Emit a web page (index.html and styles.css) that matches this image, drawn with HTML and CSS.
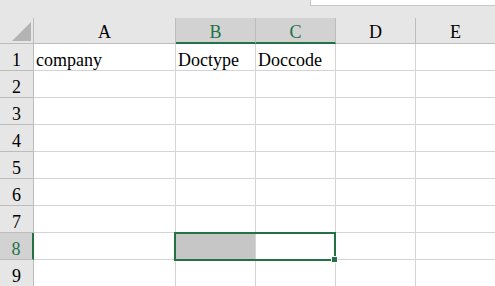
FILE: index.html
```html
<!DOCTYPE html>
<html lang="en">
<head>
    <meta charset="UTF-8">
    <title>Sheet1</title>
    <link rel="stylesheet" href="styles.css">
</head>
<body>
    <div class="topbar">
        <div class="formula-box"></div>
    </div>

    <div class="sheet">
        <div class="grid">
            <!-- column headers -->
            <div class="corner"><span class="corner-tri"></span></div>
            <div class="col-head">A</div>
            <div class="col-head active">B</div>
            <div class="col-head active">C</div>
            <div class="col-head">D</div>
            <div class="col-head">E</div>

            <div class="row-head">1</div>
            <div class="cell">company</div>
            <div class="cell">Doctype</div>
            <div class="cell">Doccode</div>
            <div class="cell"></div>
            <div class="cell"></div>

            <div class="row-head">2</div>
            <div class="cell"></div><div class="cell"></div><div class="cell"></div><div class="cell"></div><div class="cell"></div>

            <div class="row-head">3</div>
            <div class="cell"></div><div class="cell"></div><div class="cell"></div><div class="cell"></div><div class="cell"></div>

            <div class="row-head">4</div>
            <div class="cell"></div><div class="cell"></div><div class="cell"></div><div class="cell"></div><div class="cell"></div>

            <div class="row-head">5</div>
            <div class="cell"></div><div class="cell"></div><div class="cell"></div><div class="cell"></div><div class="cell"></div>

            <div class="row-head">6</div>
            <div class="cell"></div><div class="cell"></div><div class="cell"></div><div class="cell"></div><div class="cell"></div>

            <div class="row-head">7</div>
            <div class="cell"></div><div class="cell"></div><div class="cell"></div><div class="cell"></div><div class="cell"></div>

            <div class="row-head active">8</div>
            <div class="cell"></div>
            <div class="cell selected"></div>
            <div class="cell"></div>
            <div class="cell"></div>
            <div class="cell"></div>

            <div class="row-head">9</div>
            <div class="cell"></div><div class="cell"></div><div class="cell"></div><div class="cell"></div><div class="cell"></div>
        </div>

        <!-- selection range B8:C8 -->
        <div class="selection"><span class="fill-handle"></span></div>
    </div>
</body>
</html>
```

FILE: styles.css
```css
html, body {
    margin: 0;
    padding: 0;
    overflow: hidden;
}

body {
    width: 495px;
    height: 286px;
    background-color: #e6e6e6;
    font-family: "Liberation Serif", "Noto Sans CJK TC", serif;
    font-size: 18px;
    color: #000;
}

.topbar {
    height: 18px;
    display: flex;
    justify-content: flex-end;
    background-color: #e6e6e6;
}

.formula-box {
    width: 184px;
    height: 5px;
    background-color: #fff;
    border-left: 1px solid #c6c6c6;
    border-bottom: 1px solid #c6c6c6;
}

.sheet {
    position: relative;
    width: 496px;
}

.grid {
    display: grid;
    grid-template-columns: 34px 142px 80px 80px 80px 80px;
    grid-template-rows: 26px repeat(9, 27px);
    background-color: #fff;
}

.grid > div {
    box-sizing: border-box;
    border-right: 1px solid #d4d4d4;
    border-bottom: 1px solid #d4d4d4;
    white-space: nowrap;
    overflow: hidden;
}

.corner {
    position: relative;
    background-color: #e6e6e6;
    border-color: #bcbcbc !important;
}

.corner-tri {
    position: absolute;
    left: 12px;
    top: 4px;
    width: 19px;
    height: 19px;
    background-color: #b3b3b3;
    clip-path: polygon(100% 0, 100% 100%, 0 100%);
}

.col-head {
    background-color: #e6e6e6;
    border-color: #bcbcbc !important;
    text-align: center;
    line-height: 22px;
    padding-top: 3px;
}

.col-head.active {
    background-color: #d2d2d2;
    color: #217346;
    border-bottom: 2px solid #217346 !important;
}

.row-head {
    background-color: #e6e6e6;
    border-color: #bcbcbc !important;
    text-align: center;
    line-height: 22px;
    padding-top: 5px;
}

.row-head.active {
    background-color: #d2d2d2;
    color: #217346;
    border-right: 2px solid #217346 !important;
}

.cell {
    line-height: 22px;
    padding: 5px 0 0 2px;
}

.cell.selected {
    background-color: #c6c6c6;
}

.selection {
    position: absolute;
    left: 174px;
    top: 214px;
    width: 162px;
    height: 29px;
    box-sizing: border-box;
    border: 2px solid #217346;
}

.fill-handle {
    position: absolute;
    right: -4px;
    bottom: -4px;
    width: 5px;
    height: 5px;
    background-color: #217346;
    border: 1px solid #fff;
}
```
